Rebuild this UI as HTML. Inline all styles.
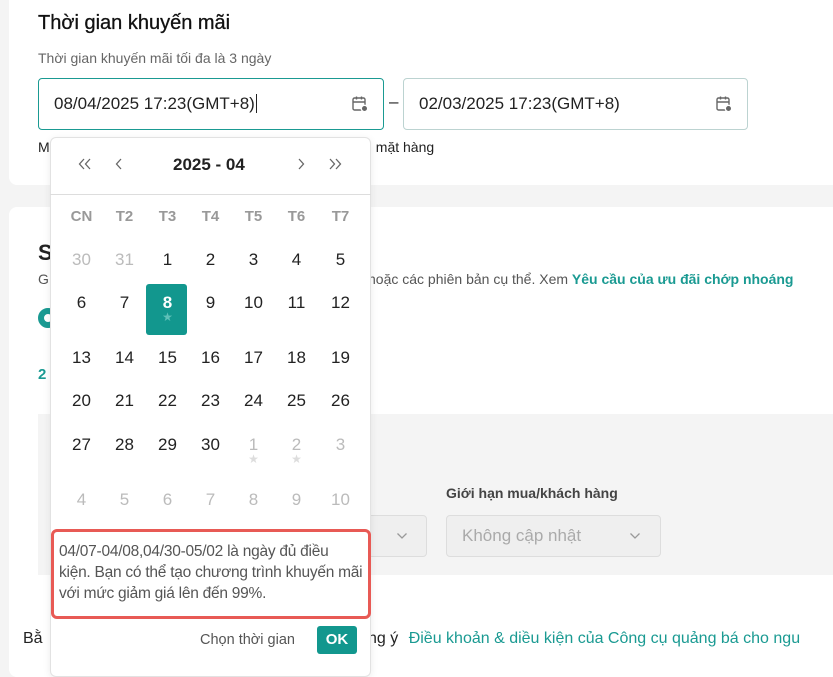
<!DOCTYPE html>
<html><head><meta charset="utf-8"><style>
*{box-sizing:border-box;margin:0;padding:0}
body{width:833px;height:662px;overflow:hidden;background:#f4f4f4;font-family:"Liberation Sans",sans-serif;position:relative;color:#222}
.a{position:absolute;white-space:nowrap}
.card{position:absolute;background:#fff;border-radius:8px}
.inp{position:absolute;height:52px;border:1px solid #bcd3d1;border-radius:4px;background:#fff;font-size:17px;padding:0 0 0 15px;line-height:50px;color:#222}
.cal{position:absolute;right:14px;top:16px}
.g{position:absolute;width:43px;text-align:center;font-size:17px}
.sel{position:absolute;height:42px;border:1px solid #ddd;border-radius:4px;background:#efefef}
</style></head><body>
<div class="card" style="left:9px;top:-10px;width:840px;height:195px"></div>
<div class="card" style="left:9px;top:207px;width:840px;height:470px"></div>
<div class="a" style="left:38px;top:12px;font-size:20px;color:#111;-webkit-text-stroke:0.3px #111">Thời gian khuyến mãi</div>
<div class="a" style="left:38px;top:50px;font-size:14px;color:#666">Thời gian khuyến mãi tối đa là 3 ngày</div>
<div class="inp" style="left:38px;top:78px;width:346px;border-color:#1a9a92">08/04/2025 17:23(GMT+8)<span style="border-left:1px solid #222;margin-left:1px"></span>
<svg class="cal" width="18" height="18" viewBox="0 0 18 18" fill="none" stroke="#666" stroke-width="1.4"><rect x="2" y="3" width="12" height="12" rx="1.5"/><path d="M2 7h12M5.5 1.5v3M10.5 1.5v3"/><circle cx="13.5" cy="13.5" r="3.2" fill="#666" stroke="#fff"/></svg></div>
<div class="a" style="left:389px;top:92px;font-size:17px">–</div>
<div class="inp" style="left:403px;top:78px;width:345px">02/03/2025 17:23(GMT+8)
<svg class="cal" width="18" height="18" viewBox="0 0 18 18" fill="none" stroke="#666" stroke-width="1.4"><rect x="2" y="3" width="12" height="12" rx="1.5"/><path d="M2 7h12M5.5 1.5v3M10.5 1.5v3"/><circle cx="13.5" cy="13.5" r="3.2" fill="#666" stroke="#fff"/></svg></div>
<div class="a" style="left:38px;top:139px;font-size:14px">M</div>
<div class="a" style="left:368px;top:139px;font-size:14px">ı mặt hàng</div>
<div class="a" style="left:38px;top:240px;font-size:22px;font-weight:bold">S</div>
<div class="a" style="left:38px;top:271px;font-size:14px;color:#555">G</div>
<div class="a" style="left:368px;top:271px;font-size:14px;color:#555">hoặc các phiên bản cụ thể. Xem <span style="color:#1a9a92;font-weight:bold">Yêu cầu của ưu đãi chớp nhoáng</span></div>
<div class="a" style="left:38px;top:308px;width:20px;height:20px;border-radius:50%;border:6px solid #1a9a92"></div>
<div class="a" style="left:38px;top:366px;font-size:15px;color:#1a9a92;font-weight:bold">2</div>
<div class="a" style="left:38px;top:414px;width:800px;height:161px;background:#f4f4f4"></div>
<div class="a" style="left:446px;top:485px;font-size:14px;color:#444;font-weight:bold">Giới hạn mua/khách hàng</div>
<div class="sel" style="left:360px;top:515px;width:67px"><svg class="a" style="left:35px;top:16px" width="12" height="8" viewBox="0 0 12 8" fill="none" stroke="#999" stroke-width="1.3"><path d="M1.5 1.5l4.5 4.5 4.5-4.5"/></svg></div>
<div class="sel" style="left:446px;top:515px;width:215px"><span class="a" style="left:15px;top:10px;font-size:17px;color:#aaa">Không cập nhật</span><svg class="a" style="left:182px;top:16px" width="12" height="8" viewBox="0 0 12 8" fill="none" stroke="#999" stroke-width="1.3"><path d="M1.5 1.5l4.5 4.5 4.5-4.5"/></svg></div>
<div class="a" style="left:23px;top:630px;font-size:16px">Bằ</div>
<div class="a" style="left:368px;top:630px;font-size:16px">ng ý <span style="color:#1a9a92;margin-left:6px">Điều khoản &amp; diều kiện của Công cụ quảng bá cho ngu</span></div>

<div class="a" style="left:50px;top:137px;width:321px;height:540px;background:#fff;border:1px solid #e2e2e2;border-radius:6px;box-shadow:0 2px 8px rgba(0,0,0,.08)"></div>
<div class="a" style="left:50px;top:194px;width:321px;height:1px;background:#ddd"></div>
<svg class="a" style="left:78px;top:157px" width="14" height="14" viewBox="0 0 14 14" fill="none" stroke="#666" stroke-width="1.3"><path d="M6 2L1.5 7 6 12M12 2L7.5 7 12 12"/></svg>
<svg class="a" style="left:115px;top:157px" width="8" height="14" viewBox="0 0 8 14" fill="none" stroke="#666" stroke-width="1.3"><path d="M6 2L1.5 7 6 12"/></svg>
<div class="a" style="left:173px;top:155px;font-size:17px;font-weight:bold">2025 - 04</div>
<svg class="a" style="left:297px;top:157px" width="8" height="14" viewBox="0 0 8 14" fill="none" stroke="#666" stroke-width="1.3"><path d="M2 2l4.5 5L2 12"/></svg>
<svg class="a" style="left:328px;top:157px" width="14" height="14" viewBox="0 0 14 14" fill="none" stroke="#666" stroke-width="1.3"><path d="M2 2l4.5 5L2 12M8 2l4.5 5L8 12"/></svg>
<div class="a" style="left:146px;top:284px;width:41px;height:51px;background:#12978e;border-radius:3px"></div>
<div id="grid"></div>
<div class="a" style="left:51px;top:529px;width:320px;height:90px;border:3px solid #e85a55;border-radius:6px;padding:9px 5px;font-size:15.5px;line-height:21px;color:#555;letter-spacing:-0.25px;overflow:hidden">04/07-04/08,04/30-05/02 là ngày đủ điều<br>kiện. Bạn có thể tạo chương trình khuyến mãi<br>với mức giảm giá lên đến 99%.</div>
<div class="a" style="left:200px;top:632px;font-size:14.5px;color:#555">Chọn thời gian</div>
<div class="a" style="left:317px;top:626px;width:40px;height:28px;background:#12978e;border-radius:3px;color:#fff;font-weight:bold;font-size:15px;text-align:center;line-height:28px">OK</div>
<script>
var xs=[60,103,146,189,232,275,319];
var rows=[[217,["CN","T2","T3","T4","T5","T6","T7"],"w"],[250,["30","31","1","2","3","4","5"]],[293,["6","7","8","9","10","11","12"]],[348,["13","14","15","16","17","18","19"]],[391,["20","21","22","23","24","25","26"]],[435,["27","28","29","30","1","2","3"]],[490,["4","5","6","7","8","9","10"]]];
var h="";
rows.forEach(function(r,ri){r[1].forEach(function(t,i){var c="";
if(ri==0)c="color:#999;font-weight:bold;font-size:15px;top:"+(r[0]-9)+"px";else{c="top:"+r[0]+"px;";
if((ri==1&&i<2)||(ri==5&&i>3)||ri==6)c+="color:#bbb;";if(ri==2&&i==2)c+="color:#fff;font-weight:bold;";}
h+='<div class="g" style="left:'+xs[i]+'px;'+c+'">'+t+'</div>';});});
h+='<div class="g" style="left:146px;top:310px;font-size:12px;color:#5fc0b8">★</div>';
h+='<div class="g" style="left:232px;top:452px;font-size:12px;color:#ddd">★</div>';
h+='<div class="g" style="left:275px;top:452px;font-size:12px;color:#ddd">★</div>';
document.getElementById("grid").innerHTML=h;
</script>
</body></html>
